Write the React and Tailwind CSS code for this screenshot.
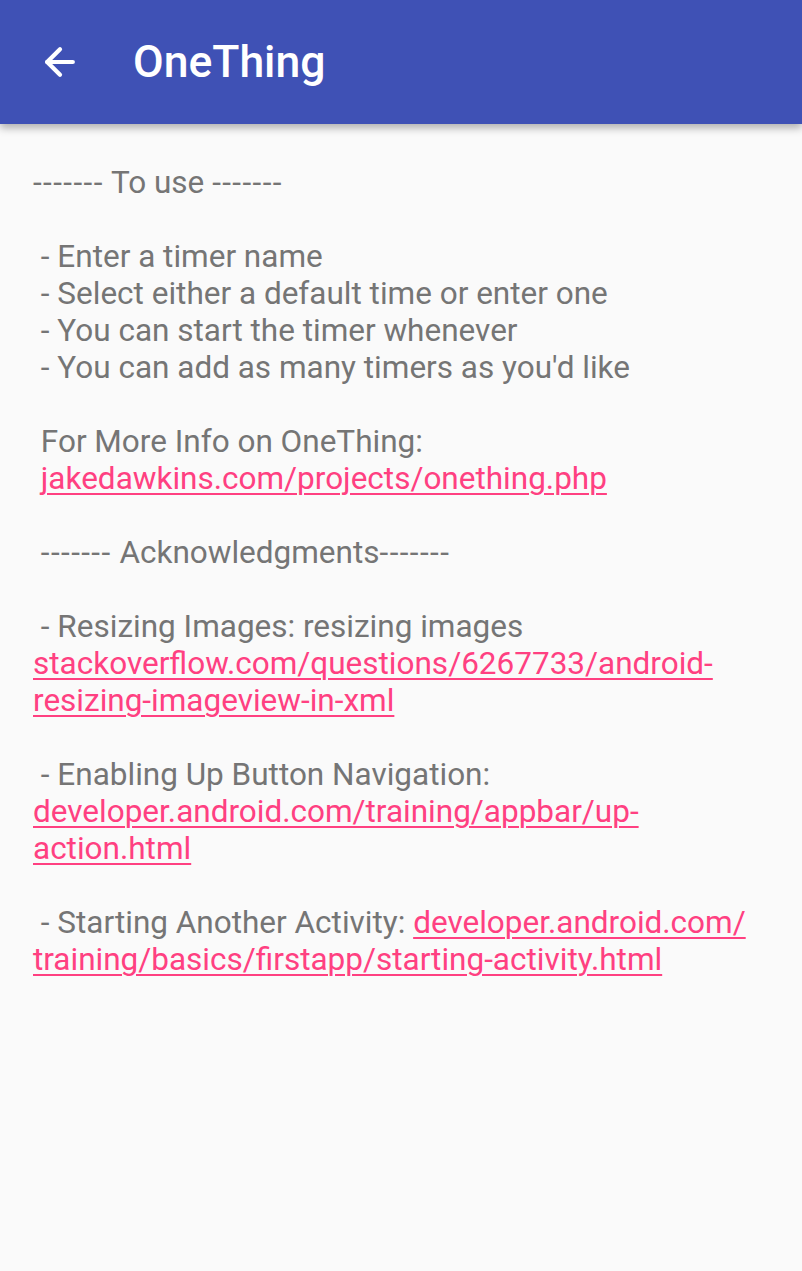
import { ArrowLeft } from 'lucide-react';

function Link({ children }) {
  return (
    <span className="text-[#ff4081] underline decoration-2 underline-offset-[4px] decoration-[#ff4081]">
      {children}
    </span>
  );
}

function Dashes() {
  return <span className="tracking-[1.4px]">-------</span>;
}

export default function App() {
  return (
    <div className="min-h-[1271px] w-[802px] bg-[#fafafa] font-['Roboto',sans-serif]">
      {/* App bar */}
      <div className="relative z-10 flex h-[124px] items-center bg-[#3f51b5] shadow-[0_4px_8px_rgba(0,0,0,0.3)]">
        <div className="flex w-[133px] pl-[38px]">
          <ArrowLeft className="h-[44px] w-[44px] text-white" strokeWidth={2.3} />
        </div>
        <h1 className="text-[44.5px] font-medium text-white">OneThing</h1>
      </div>

      {/* Body text */}
      <div className="whitespace-pre-wrap px-[33px] pt-[40px] text-[31.5px] leading-[37px] text-[#757575]">
        <div><Dashes /> To use <Dashes /></div>
        <div>&nbsp;</div>
        <div> - Enter a timer name</div>
        <div> - Select either a default time or enter one</div>
        <div> - You can start the timer whenever</div>
        <div> - You can add as many timers as you'd like</div>
        <div>&nbsp;</div>
        <div> For More Info on OneThing:</div>
        <div> <Link>jakedawkins.com/projects/onething.php</Link></div>
        <div>&nbsp;</div>
        <div> <Dashes /> Acknowledgments<Dashes /></div>
        <div>&nbsp;</div>
        <div> - Resizing Images: resizing images</div>
        <div><Link>stackoverflow.com/questions/6267733/android-</Link></div>
        <div><Link>resizing-imageview-in-xml</Link></div>
        <div>&nbsp;</div>
        <div> - Enabling Up Button Navigation:</div>
        <div><Link>developer.android.com/training/appbar/up-</Link></div>
        <div><Link>action.html</Link></div>
        <div>&nbsp;</div>
        <div> - Starting Another Activity: <Link>developer.android.com/</Link></div>
        <div><Link>training/basics/firstapp/starting-activity.html</Link></div>
      </div>
    </div>
  );
}
